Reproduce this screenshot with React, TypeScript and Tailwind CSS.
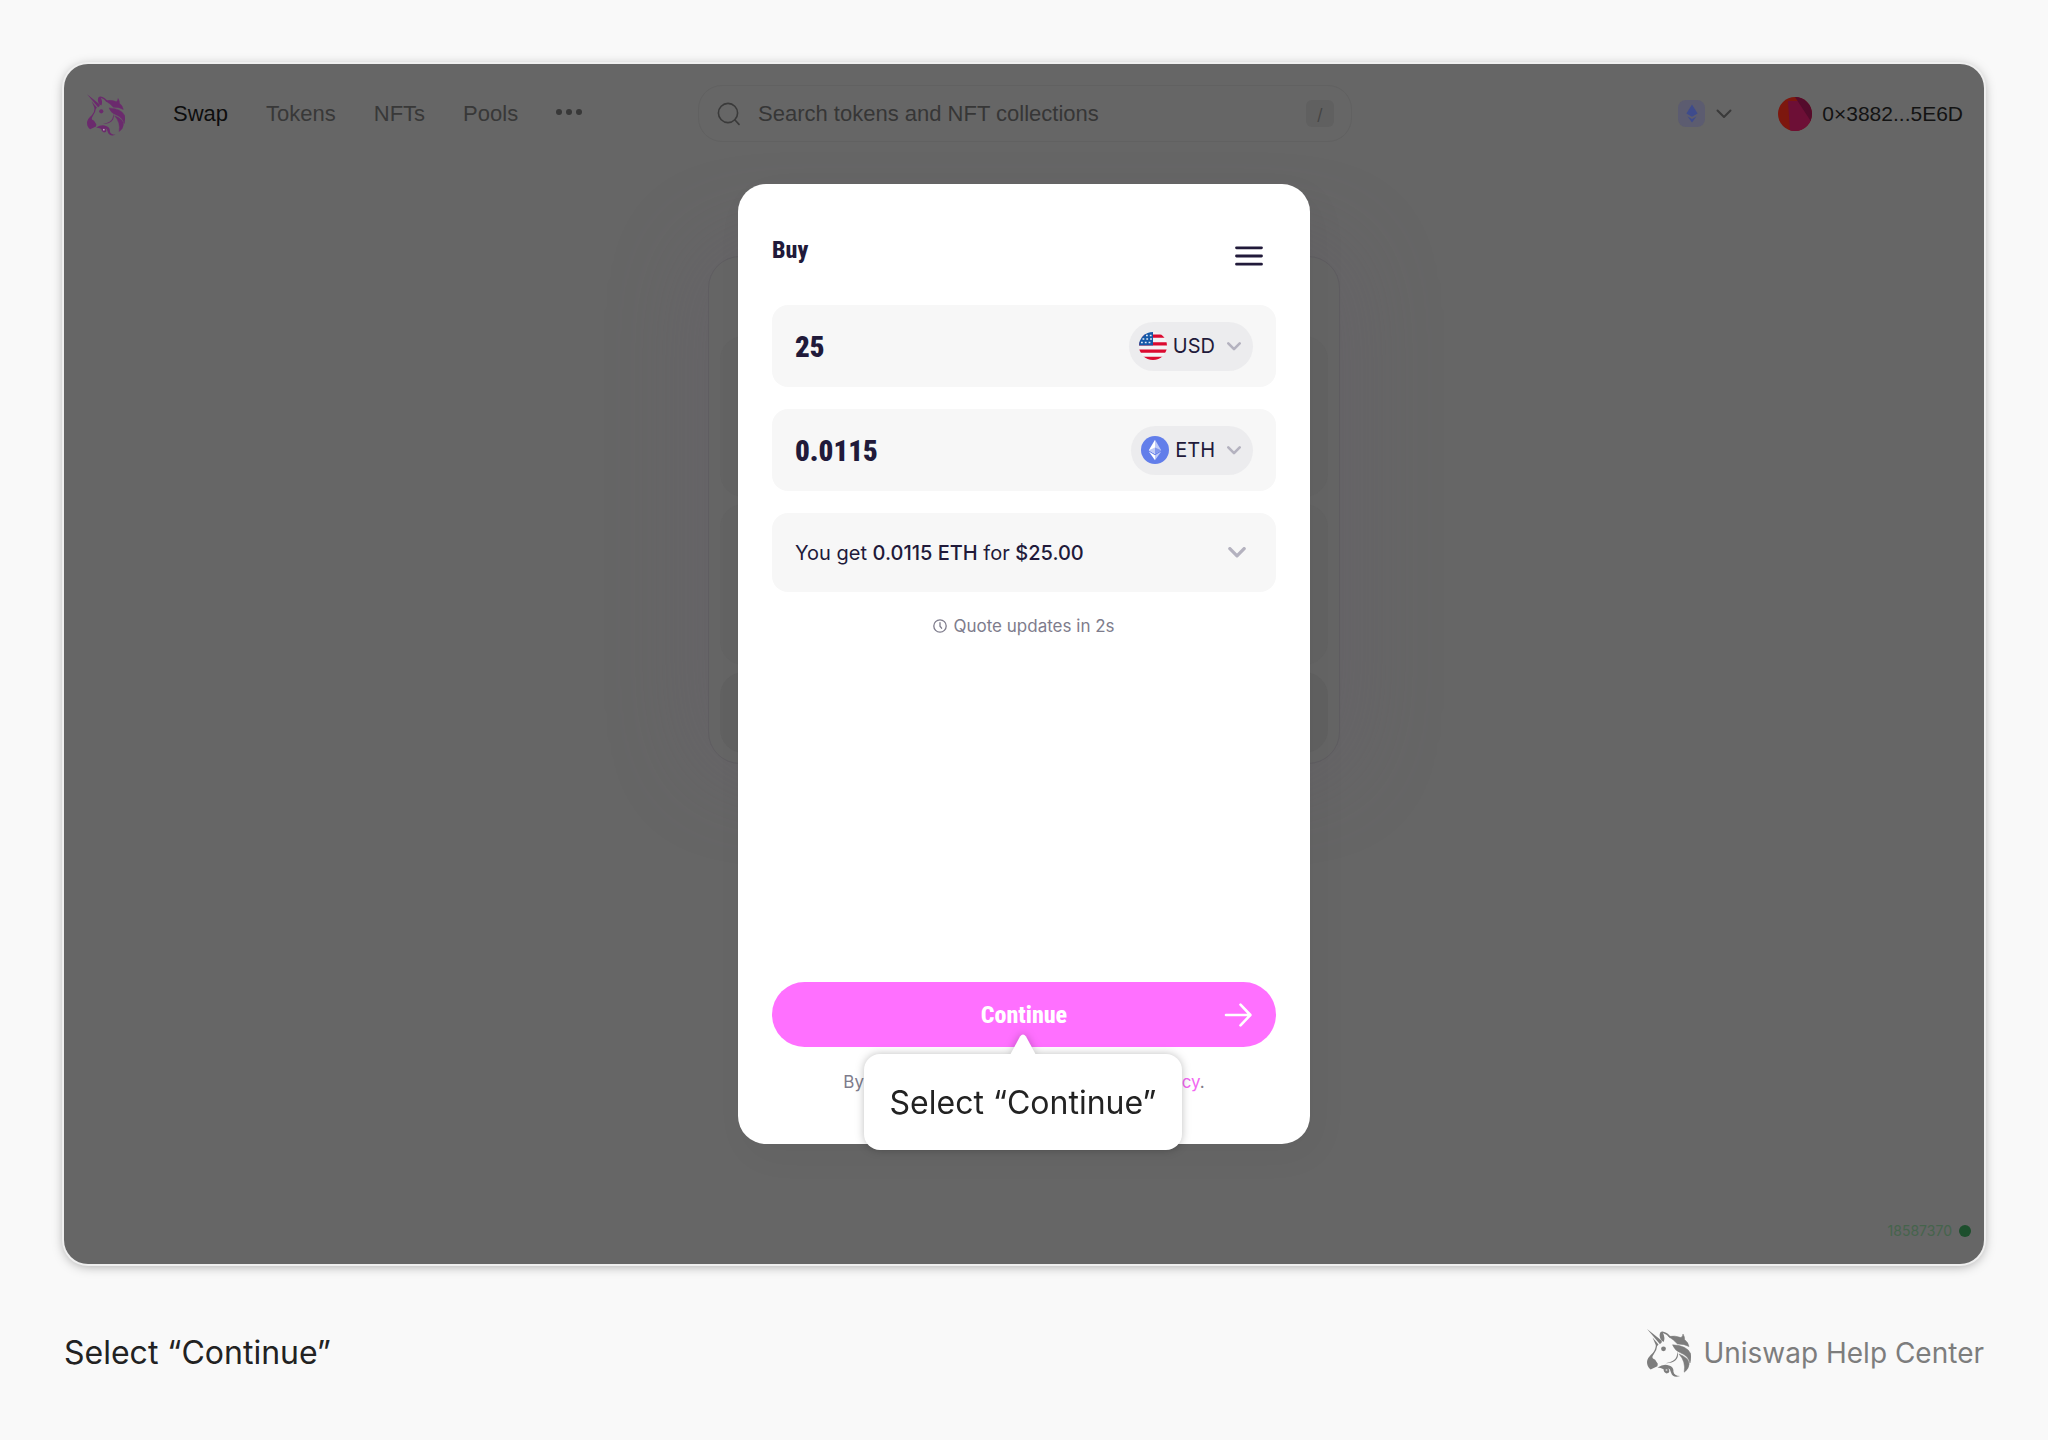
import React from "react";

function Unicorn({ className }: { className: string }) {
  return (
    <svg viewBox="0 0 44 48" className={className} fill="currentColor" aria-hidden="true">
      <path d="M0 0 L14.5 11.5 Q15.5 13 14 14.3 L12.8 15 Q7 8 0 0Z" />
      <path d="M5.5 8.5 L11.5 15.5 L9.5 17.5Z" />
      <path d="M12.6 6 Q13 2.4 15.6 2.6 Q20.5 3.4 24 8.2 L23 9 Q19.5 4.8 16 4 Q18.5 9 16.6 13 Q12.6 11 12.6 6Z" />
      <g stroke="currentColor" strokeWidth="0.5" strokeLinejoin="round">
        <path d="M21.5 7.5 Q28 6.2 34 8.6 Q36 7 36 5 Q38 8.4 37.6 10.5 Q41 13 42 17.5 Q37 14.8 30.5 15 Q27 11 21.5 7.5Z" />
        <path d="M25.5 15.8 Q40 16.4 43.6 24.6 Q44.6 29 43 34 Q41 26.6 33.5 23.8 Q27.6 21.6 25.5 15.8Z" />
        <path d="M32 25 Q42 29 42.2 35 Q41.5 40.5 37.2 43.2 Q39 32.5 32 25Z" />
      </g>
      <path d="M9 15 Q8.6 21 5.8 24 Q0 29 0 33 Q0 38 3.6 40.4 L10.4 37.2 Q11.6 34.6 9.6 33 Q8.6 30.2 6 29.4 Q4.6 28 6.6 25.4 Q10 21 10.6 15Z" />
      <circle cx="16.5" cy="19.8" r="2.4" />
      <path d="M31 22.5 Q32.5 34 18.5 34.2 Q28 32.4 29.4 28 Q30.2 25.5 31 22.5Z" />
      <path d="M10.5 38.6 Q17 34.2 22 36.6 Q27 38.2 26.4 42.6 Q27 47 33 47 Q26 49.6 24 43.4 Q23 39.6 21.4 39.2 Q24 44 19.6 44.4 Q16.4 43.4 16.6 40.2 Q13.6 39 10.5 38.6Z" />
      <circle cx="19.5" cy="41" r="1" fill="#f9f9f9" fillOpacity="0.6" />
    </svg>
  );
}

function Chevron({ className, width }: { className: string; width: number }) {
  return (
    <svg viewBox="0 0 16 10" className={className} fill="none" stroke="currentColor" strokeWidth={width} strokeLinecap="round" strokeLinejoin="round" aria-hidden="true">
      <path d="M1.5 1.5 L8 8 L14.5 1.5" />
    </svg>
  );
}

function UsFlag() {
  return (
    <svg viewBox="0 0 28 28" className="size-7" aria-hidden="true">
      <clipPath id="flag-disc"><circle cx="14" cy="14" r="14" /></clipPath>
      <g clipPath="url(#flag-disc)">
        <rect width="28" height="28" fill="#f3f3f5" />
        <path d="M0 4.2H28M0 11.8H28M0 19.2H28M0 26.4H28" stroke="#db0a30" strokeWidth="3.2" />
        <rect width="14" height="13.4" fill="#1559a8" />
        <path d="M2 10.5H13M3.5 7H13M7 3.4H13" stroke="#dfeaf6" strokeWidth="1.5" strokeDasharray="1.8 2" />
      </g>
    </svg>
  );
}

function EthCoin() {
  return (
    <svg viewBox="0 0 28 28" className="size-7" aria-hidden="true">
      <circle cx="14" cy="14" r="14" fill="#627eea" />
      <path d="M14 3.8 L7.8 14.2 L14 17.9Z" fill="#fff" />
      <path d="M14 3.8 L20.2 14.2 L14 17.9Z" fill="#c0cbf7" />
      <path d="M14 11.4 L7.8 14.2 L14 17.9Z" fill="#c0cbf7" />
      <path d="M14 11.4 L20.2 14.2 L14 17.9Z" fill="#8297ee" />
      <path d="M7.8 15.6 L14 19.2V24.2Z" fill="#fff" />
      <path d="M20.2 15.6 L14 19.2V24.2Z" fill="#c0cbf7" />
    </svg>
  );
}

function AmountField({ id, label, value, code, icon }: { id: string; label: string; value: string; code: string; icon: React.ReactNode }) {
  return (
    <div className="flex h-[82px] items-center justify-between rounded-2xl bg-[#f7f7f7] px-[23px]">
      <input
        id={id}
        aria-label={label}
        defaultValue={value}
        className="w-0 flex-1 bg-transparent pt-[2px] font-['Roboto_Condensed',Roboto,sans-serif] text-[29px] font-black text-[#211a3a] outline-none"
      />
      <button className="flex h-[49px] items-center rounded-full bg-[#ececee] pr-3 pl-[10px] text-[#211a3a]">
        {icon}
        <span className="ml-[6px]">{code}</span>
        <Chevron className="ml-3 h-[9px] w-[14px] text-[#b4b2bf]" width={3} />
      </button>
    </div>
  );
}

function NavBar() {
  return (
    <header className="grid grid-cols-[1fr_654px_1fr] items-center pt-[21px] pr-[21px] pl-[23px] font-['Liberation_Sans',Arial,sans-serif] text-[22px]">
      <div className="flex items-center">
        <a href="#home" aria-label="Home"><Unicorn className="mt-[2px] h-[42px] w-[38px] text-[#6b2a6d]" /></a>
        <nav className="ml-12 flex items-center gap-[38px] text-[#383838]">
          <a href="#swap" className="text-[#0d0d0d]">Swap</a>
          <a href="#tokens">Tokens</a>
          <a href="#nfts">NFTs</a>
          <a href="#pools">Pools</a>
          <button aria-label="More">
            <svg viewBox="0 0 26 6" className="mb-1 h-[6px] w-[26px]" fill="currentColor"><circle cx="3" cy="3" r="3" /><circle cx="13" cy="3" r="3" /><circle cx="23" cy="3" r="3" /></svg>
          </button>
        </nav>
      </div>
      <div className="flex h-[57px] items-center rounded-3xl border border-[#616161] px-[17px]">
        <svg viewBox="0 0 24 24" className="size-6 text-[#3a3a3a]" fill="none" stroke="currentColor" strokeWidth="1.6" strokeLinecap="round" aria-hidden="true"><circle cx="12" cy="11" r="9.6" /><path d="M19 18 L23 22.4" /></svg>
        <input aria-label="Search tokens and NFT collections" placeholder="Search tokens and NFT collections" className="ml-[18px] w-0 flex-1 bg-transparent outline-none placeholder:text-[#363636]" />
        <kbd className="grid h-[27px] w-7 place-items-center rounded-md bg-[#606060] font-[Inter,sans-serif] text-base text-[#444]">/</kbd>
      </div>
      <div className="flex items-center justify-end">
        <button aria-label="Select network" className="flex items-center gap-[11px]">
          <span className="grid size-[27px] place-items-center rounded-lg bg-[#5c5c70]">
            <svg viewBox="0 0 12 19" className="h-[19px] w-3" fill="#3e4b8c"><path d="M6 0.5 L11.6 9.4 L6 12.8 L0.4 9.4Z" /><path d="M1.6 12.4 L6 15 L10.4 12.4 L6 18.6Z" /></svg>
          </span>
          <Chevron className="h-[10px] w-4 text-[#3a3a3a]" width={2} />
        </button>
        <button className="ml-[46px] flex items-center gap-[10px] text-[21px] text-[#131313]">
          <svg viewBox="0 0 34 34" className="size-[34px]" aria-hidden="true">
            <clipPath id="avatar-disc"><circle cx="17" cy="17" r="17" /></clipPath>
            <g clipPath="url(#avatar-disc)">
              <rect width="34" height="34" fill="#7d170e" />
              <path d="M10 4 L24 4 L34 24 V34 H12Z" fill="#6d0f36" />
              <path d="M17 0H34V26Z" fill="#540b2c" />
            </g>
          </svg>
          <span>0×3882...5E6D</span>
        </button>
      </div>
    </header>
  );
}

function BuyDialog() {
  return (
    <section role="dialog" aria-label="Buy" className="relative flex h-[960px] w-[572px] flex-col rounded-[28px] bg-white px-[34px] text-xl shadow-[8px_12px_36px_rgba(0,0,0,0.04)]">
      <div className="flex items-start justify-between pt-[52px] pr-[13px]">
        <h1 className="font-['Roboto_Condensed',Roboto,sans-serif] text-2xl leading-7 font-extrabold text-[#211a3a]">Buy</h1>
        <button aria-label="Menu" className="mt-[10px]">
          <svg viewBox="0 0 28 20" className="h-5 w-7" fill="none" stroke="#211a3a" strokeWidth="2.8" strokeLinecap="round"><path d="M1.5 1.8H26.5M1.5 10H26.5M1.5 18.2H26.5" /></svg>
        </button>
      </div>
      <div className="mt-[39px] flex flex-col gap-[22px]">
        <AmountField id="pay" label="You pay" value="25" code="USD" icon={<UsFlag />} />
        <AmountField id="get" label="You get" value="0.0115" code="ETH" icon={<EthCoin />} />
        <button className="flex h-[79px] items-center justify-between rounded-2xl bg-[#f7f7f7] pr-[30px] pl-[23px] text-[#211a3a]">
          <span>You get <span className="font-medium">0.0115 ETH</span> for <span className="font-medium">$25.00</span></span>
          <Chevron className="h-[11px] w-[18px] text-[#b4b2bf]" width={3} />
        </button>
      </div>
      <p className="mt-5 flex items-center justify-center gap-[6px] text-[17px] leading-7 text-[#7e7c8c]">
        <svg viewBox="0 0 14 14" className="size-[14px]" fill="none" stroke="currentColor" strokeWidth="1.3" strokeLinecap="round" aria-hidden="true"><circle cx="7" cy="7" r="6.2" /><path d="M7 3.6V7.2L8.6 9.2" /></svg>
        Quote updates in 2s
      </p>
      <div className="mt-auto mb-[48px]">
        <div className="relative">
          <button className="relative flex h-[65px] w-full items-center justify-center rounded-full bg-[#ff70ff] text-white">
            <span className="font-['Roboto_Condensed',Roboto,sans-serif] text-2xl font-extrabold">Continue</span>
            <svg viewBox="0 0 28 24" className="absolute right-6 h-6 w-7" fill="none" stroke="currentColor" strokeWidth="2.6" strokeLinecap="round" strokeLinejoin="round" aria-hidden="true"><path d="M2 12H26M16.5 1.6L26.4 12L16.5 22.4" /></svg>
          </button>
          <div role="tooltip" className="absolute top-[72px] left-[92px] z-10 grid h-24 w-[318px] place-items-center rounded-2xl bg-white pt-[2px] text-[32px] text-[#222] drop-shadow-[0_0_4px_rgba(0,0,0,0.25)]">
            <svg viewBox="0 0 26 21" className="absolute -top-5 left-[146px] h-[21px] w-[26px]" fill="#fff" aria-hidden="true"><path d="M0 21 L10 2.4 Q13 -1.6 16 2.4 L26 21Z" /></svg>
            Select “Continue”
          </div>
        </div>
        <p className="mt-[21px] text-center text-[17px] leading-7 text-[#7e7c8c]">
          By continuing you agree to our <a href="#cookies" className="text-[#f268f2]">cookie policy</a>.
        </p>
      </div>
    </section>
  );
}

function SwapCardBackdrop() {
  return (
    <div className="absolute top-[72px] flex h-[508px] w-[632px] flex-col gap-[7px] rounded-[32px] border border-[#5f5d61] bg-[#656565] px-[11px] pt-[79px] pb-[10px] shadow-[0_0_90px_10px_rgba(104,92,108,0.3)]">
      <div className="flex-[2] rounded-3xl bg-[#636363]" />
      <div className="flex-[2] rounded-3xl bg-[#636363]" />
      <div className="flex-1 rounded-3xl bg-[#616161]" />
    </div>
  );
}

export default function App() {
  return (
    <div className="min-h-screen bg-[#f9f9f9] p-16 pb-0 font-[Inter,sans-serif]">
      <main className="flex h-[1200px] flex-col rounded-3xl bg-[#666] shadow-[0_0_0_2px_#efefef,0_2px_12px_rgba(0,0,0,0.35)]">
        <NavBar />
        <div className="relative mt-[42px] flex justify-center">
          <SwapCardBackdrop />
          <BuyDialog />
        </div>
        <p className="mt-auto mb-[21px] flex items-center justify-end gap-[7px] pr-[13px] text-sm leading-6 text-[#45644c]">
          18587370
          <span className="size-3 rounded-full bg-[#1d4f2d]" />
        </p>
      </main>
      <footer className="flex items-center justify-between pt-[65px]">
        <p className="text-[32px] leading-[48px] text-[#222]">Select “Continue”</p>
        <a href="#help" className="flex items-center gap-3 text-[28px] text-[#7d7d7d]">
          <Unicorn className="h-12 w-11" />
          Uniswap Help Center
        </a>
      </footer>
    </div>
  );
}
